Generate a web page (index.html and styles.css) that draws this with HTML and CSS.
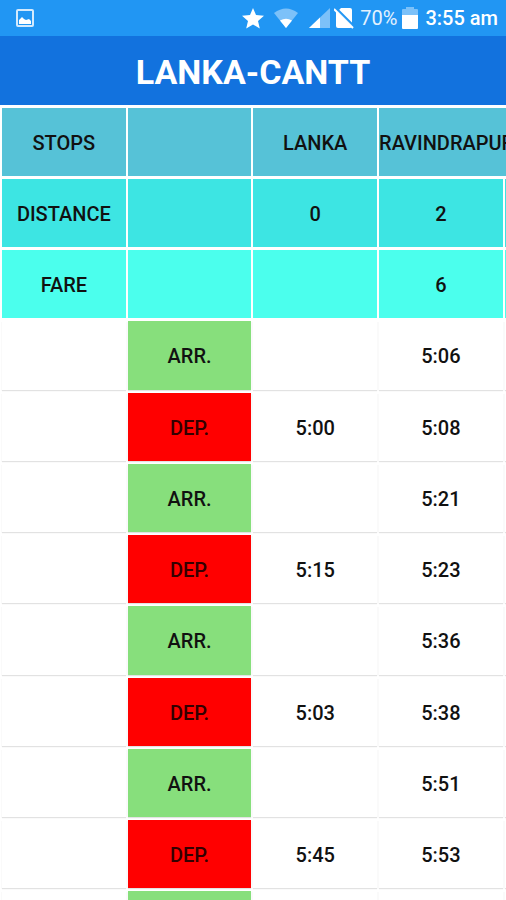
FILE: index.html
```html
<!DOCTYPE html>
<html lang="en">
<head>
<meta charset="utf-8">
<meta name="viewport" content="width=device-width, initial-scale=1">
<title>LANKA-CANTT</title>
<link rel="stylesheet" href="styles.css">
</head>
<body>
<div class="status">
  <svg class="photo" width="20" height="20" viewBox="0 0 20 20" aria-hidden="true"><rect x="2" y="2" width="16" height="16" rx="1" fill="none" stroke="#d3eafd" stroke-width="2"/><path d="M4 16v-4l3-3 2 2 2 1 3-1 2 2v3z" fill="#fff"/></svg>
  <div class="tray">
    <svg width="22" height="22" viewBox="0 0 22 22" aria-hidden="true"><path d="M11 1l3 7 8 .7-6 5.2 1.8 7.6L11 17.400l-6.800 4.100L6 13.900 0 8.700 8 8z" fill="#fff"/></svg>
    <svg class="wifi" width="26" height="20" viewBox="0 0 26 20" aria-hidden="true"><path d="M1 5Q13-4 25 5L13 20z" fill="#7cc1f9"/><path d="M7 12.500Q13 9 19 12.500L13 20z" fill="#fff"/></svg>
    <svg class="signal" width="21" height="20" viewBox="0 0 21 20" aria-hidden="true"><path d="M21 0v20H0z" fill="#7cc1f9"/><path d="M11 9.500V20H0z" fill="#fff"/></svg>
    <svg class="sim" width="20" height="22" viewBox="0 0 20 22" aria-hidden="true"><path d="M7 1h9q2 0 2 2v15L4 4zM2 4L18 20q-1 1-2 1H4q-2 0-2-2z" fill="#fff"/><path d="M3 2l16 16" stroke="#2196f3" stroke-width="2"/><path d="M0 2l19 19" stroke="#fff" stroke-width="2"/></svg>
    <span class="percent">70%</span>
    <svg class="battery" width="16" height="22" viewBox="0 0 16 22" aria-hidden="true"><path d="M0 8V3q0-1 1-1h3V0h8v2h3q1 0 1 1v5z" fill="#7cc1f9"/><path d="M0 8h16v13q0 1-1 1H1q-1 0-1-1z" fill="#fff"/></svg>
    <span class="clock">3:55 am</span>
  </div>
</div>
<header class="bar"><h1>LANKA-CANTT</h1></header>
<main class="scroller">
  <table>
    <colgroup><col><col><col><col><col></colgroup>
    <tbody>
    <tr class="stops"><th scope="row">STOPS</th><td></td><th scope="col">LANKA</th><th scope="col" colspan="2" class="long">RAVINDRAPURI</th></tr>
    <tr class="distance"><th scope="row">DISTANCE</th><td></td><td>0</td><td>2</td><td></td></tr>
    <tr class="fare"><th scope="row">FARE</th><td></td><td></td><td>6</td><td></td></tr>
    <tr><td></td><th scope="row" class="arr">ARR.</th><td></td><td>5:06</td><td></td></tr>
    <tr><td></td><th scope="row" class="dep">DEP.</th><td>5:00</td><td>5:08</td><td></td></tr>
    <tr><td></td><th scope="row" class="arr">ARR.</th><td></td><td>5:21</td><td></td></tr>
    <tr><td></td><th scope="row" class="dep">DEP.</th><td>5:15</td><td>5:23</td><td></td></tr>
    <tr><td></td><th scope="row" class="arr">ARR.</th><td></td><td>5:36</td><td></td></tr>
    <tr><td></td><th scope="row" class="dep">DEP.</th><td>5:03</td><td>5:38</td><td></td></tr>
    <tr><td></td><th scope="row" class="arr">ARR.</th><td></td><td>5:51</td><td></td></tr>
    <tr><td></td><th scope="row" class="dep">DEP.</th><td>5:45</td><td>5:53</td><td></td></tr>
    <tr><td></td><th scope="row" class="arr"></th><td></td><td></td><td></td></tr>
    </tbody>
  </table>
</main>
</body>
</html>
```
FILE: styles.css
```css
* { box-sizing: border-box; }
body {
  margin: 0;
  height: 100vh;
  display: flex;
  flex-direction: column;
  overflow: hidden;
  background: #fff;
  color: #111;
  font-family: Roboto, sans-serif;
}
.status {
  flex: none;
  height: 36px;
  padding: 0 8px 0 15px;
  display: flex;
  align-items: center;
  justify-content: space-between;
  background: #2196f3;
  color: #fff;
  font-size: 20px;
}
.tray { display: flex; align-items: center; }
.wifi { margin-left: 9px; }
.signal { margin-left: 10px; }
.sim { margin-left: 4px; }
.percent { margin-left: 6px; color: #e3f2fe; }
.battery { margin-left: 5px; }
.clock { margin-left: 7px; font-weight: 500; }
.bar {
  flex: none;
  height: 69px;
  padding-top: 2px;
  display: flex;
  align-items: center;
  justify-content: center;
  background: #1272de;
  color: #fff;
}
h1 { margin: 0; font-size: 34px; line-height: 40px; font-weight: 700; }
.scroller { flex: 1; overflow: hidden; }
table {
  width: calc(125vw - 2px);
  table-layout: fixed;
  border-collapse: separate;
  border-spacing: 2px 3px;
  font-size: 20px;
}
th, td {
  height: 68px;
  padding: 1px 0 0;
  text-align: center;
  font-weight: 500;
  background: #fff;
  box-shadow: 0 1px 1px #e2e2e2;
}
tr:nth-child(4n) > * { height: 69px; }
.stops > * { background: #56c2d7; }
.distance > * { background: #3de5e3; }
.fare > * { background: #4bffed; }
.stops > *, .distance > *, .fare > * { box-shadow: none; }
.long { text-align: left; white-space: nowrap; }
.arr { background: #87df7c; }
.dep { background: #f00; color: #300; }
```
